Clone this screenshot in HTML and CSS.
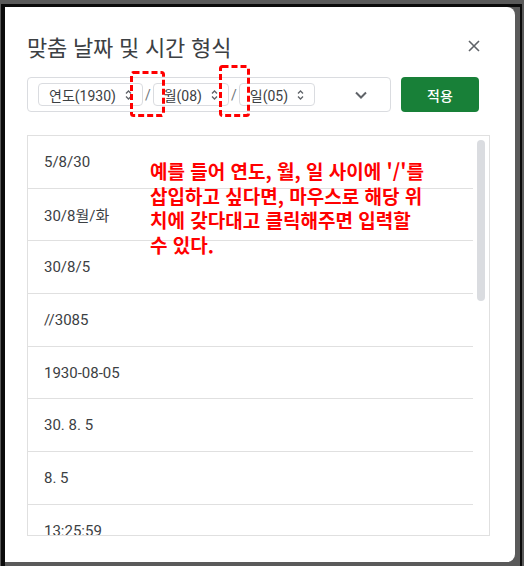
FILE: index.html
```html
<!DOCTYPE html>
<html lang="ko">
<head>
<meta charset="utf-8">
<link rel="stylesheet" href="styles.css">
</head>
<body>
<div class="frame">
  <div class="dialog">
    <div class="header">
      <h1 class="title">맞춤 날짜 및 시간 형식</h1>
      <button class="close" aria-label="닫기">
        <svg width="12" height="12" viewBox="0 0 12 12"><path d="M1 1 L11 11 M11 1 L1 11" stroke="#5f6368" stroke-width="1.6" fill="none"/></svg>
      </button>
    </div>
    <div class="toolbar">
      <div class="format-input">
        <span class="chip">연도(1930)<svg class="spin" width="7" height="12" viewBox="0 0 7 12"><path d="M1 4.5 L3.5 2 L6 4.5 M1 7.5 L3.5 10 L6 7.5" stroke="#5f6368" stroke-width="1.3" fill="none"/></svg></span>
        <span class="sep">/</span>
        <span class="chip">월(08)<svg class="spin" width="7" height="12" viewBox="0 0 7 12"><path d="M1 4.5 L3.5 2 L6 4.5 M1 7.5 L3.5 10 L6 7.5" stroke="#5f6368" stroke-width="1.3" fill="none"/></svg></span>
        <span class="sep">/</span>
        <span class="chip">일(05)<svg class="spin" width="7" height="12" viewBox="0 0 7 12"><path d="M1 4.5 L3.5 2 L6 4.5 M1 7.5 L3.5 10 L6 7.5" stroke="#5f6368" stroke-width="1.3" fill="none"/></svg></span>
        <svg class="caret" width="12" height="8" viewBox="0 0 12 8"><path d="M1 1.5 L6 6.5 L11 1.5" stroke="#5f6368" stroke-width="2" fill="none"/></svg>
      </div>
      <button class="apply">적용</button>
    </div>
    <div class="list">
      <div class="rows">
        <div class="row">5/8/30</div>
        <div class="row">30/8월/화</div>
        <div class="row">30/8/5</div>
        <div class="row">//3085</div>
        <div class="row">1930-08-05</div>
        <div class="row">30. 8. 5</div>
        <div class="row">8. 5</div>
        <div class="row">13:25:59</div>
      </div>
      <div class="track"><div class="thumb"></div></div>
    </div>

    <svg class="mark mark-1" width="35" height="46" viewBox="0 0 35 46"><rect x="1.5" y="1.5" width="32" height="43" rx="2" fill="none" stroke="#ff0000" stroke-width="3" stroke-dasharray="6 3"/></svg>
    <svg class="mark mark-2" width="31" height="52" viewBox="0 0 31 52"><rect x="1.5" y="1.5" width="28" height="49" rx="2" fill="none" stroke="#ff0000" stroke-width="3" stroke-dasharray="6 3"/></svg>
    <p class="note">예를 들어 연도, 월, 일 사이에 '/'를<br>삽입하고 싶다면, 마우스로 해당 위<br>치에 갖다대고 클릭해주면 입력할<br>수 있다.</p>
  </div>
</div>
</body>
</html>
```

FILE: styles.css
```css
* { box-sizing: border-box; }

html, body {
  margin: 0;
  padding: 0;
}

body {
  width: 524px;
  height: 566px;
  overflow: hidden;
  background: #5a5a5a;
  font-family: Roboto, "Noto Sans CJK KR", sans-serif;
}

.frame {
  margin: 4px 0 0 1px;
  width: 521px;
  height: 562px;
  border-left: 4px solid #0b0b0b;
  border-top: 3px solid #0b0b0b;
  border-right: 2px solid #0b0b0b;
}

.dialog {
  position: relative;
  width: 510px;
  height: 555px;
  background: #ffffff;
  border-radius: 0 8px 8px 0;
  padding: 0 25px 0 22px;
  display: flex;
  flex-direction: column;
}

.header {
  display: flex;
  align-items: center;
  justify-content: space-between;
  padding-top: 25px;
  height: 53px;
  margin-bottom: 17px;
}

.title {
  margin: 0;
  font-family: "Noto Sans CJK KR", sans-serif;
  font-weight: 400;
  font-size: 22px;
  line-height: 28px;
  color: #3c4043;
  letter-spacing: -0.2px;
}

.close {
  width: 20px;
  height: 20px;
  margin-right: 6px;
  padding: 0;
  border: none;
  background: none;
  display: flex;
  align-items: center;
  justify-content: center;
}

.toolbar {
  display: flex;
  gap: 10px;
  height: 35px;
}

.format-input {
  width: 364px;
  height: 35px;
  border: 1px solid #dadce0;
  border-radius: 4px;
  display: flex;
  align-items: center;
  padding-left: 10px;
  padding-right: 23px;
}

.chip {
  height: 23px;
  border: 1px solid #dadce0;
  border-radius: 4px;
  display: inline-flex;
  align-items: center;
  padding: 0 10px 0 10px;
  font-size: 14px;
  color: #3c4043;
  font-family: Roboto, "Noto Sans CJK KR", sans-serif;
}

.spin {
  margin-left: 9px;
}

.sep {
  font-size: 14px;
  color: #70757a;
  margin: 0 2px;
}

.caret {
  margin-left: auto;
}

.apply {
  width: 78px;
  height: 35px;
  border: none;
  border-radius: 4px;
  background: #188038;
  color: #ffffff;
  font-family: "Noto Sans CJK KR", sans-serif;
  font-size: 14px;
  font-weight: 500;
  padding: 0;
}

.list {
  margin-top: 23px;
  width: 463px;
  height: 401px;
  border: 1px solid #e0e0e0;
  overflow: hidden;
  display: grid;
  grid-template-columns: 445px 1fr;
}

.rows {
  display: flex;
  flex-direction: column;
}

.row {
  flex: 0 0 auto;
  height: 52.7px;
  border-bottom: 1px solid #e0e0e0;
  display: flex;
  align-items: center;
  padding-left: 16px;
  font-size: 15px;
  color: #3c4043;
}

.track {
  padding: 4px 0 0 4px;
}

.thumb {
  width: 8px;
  height: 161px;
  border-radius: 4px;
  background: #dadce0;
}

.mark {
  position: absolute;
}

.mark-1 {
  left: 125px;
  top: 64px;
}

.mark-2 {
  left: 214px;
  top: 58px;
}

.note {
  position: absolute;
  left: 145px;
  top: 152px;
  margin: 0;
  font-family: "Noto Sans CJK KR", sans-serif;
  font-weight: 700;
  font-size: 19px;
  line-height: 24.5px;
  color: #ff0000;
  white-space: nowrap;
}
```
